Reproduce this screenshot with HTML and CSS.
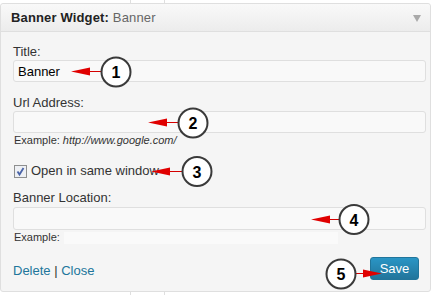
FILE: index.html
```html
<!DOCTYPE html>
<html lang="en">
<head>
    <meta charset="UTF-8">
    <title>Banner Widget</title>
    <link rel="stylesheet" href="styles.css">
</head>
<body>
    <div class="edge"></div>
    <div class="widget">
        <div class="widget-top">
            <h3><strong>Banner Widget:</strong> <span class="in-title">Banner</span></h3>
            <svg class="toggle" width="8" height="7" viewBox="0 0 8 7"><polygon points="0,0 8,0 4,7" fill="#a9a9a9"/></svg>
        </div>
        <form class="widget-inside">
            <label for="title">Title:</label>
            <input id="title" type="text" value="Banner">

            <label for="url" class="gap">Url Address:</label>
            <input id="url" type="text">
            <p class="hint">Example: <em>http://www.google.com/</em></p>

            <label class="check-row">
                <span class="check">
                    <svg width="13" height="13" viewBox="0 0 13 13">
                        <rect x="0.5" y="0.5" width="12" height="12" fill="#eef0f4" stroke="#8e8f8f"/>
                        <path d="M3.5 6.5 L5.5 9.5 L9.5 3" fill="none" stroke="#4a64a8" stroke-width="1.8"/>
                    </svg>
                </span>
                Open in same window
            </label>

            <label for="location" class="gap-small">Banner Location:</label>
            <input id="location" type="text">
            <p class="hint">Example: <span class="blank"></span></p>

            <div class="actions">
                <div class="links"><a href="#">Delete</a> | <a href="#">Close</a></div>
                <button type="button" class="save">Save</button>
            </div>
        </form>
    </div>
    <div class="edge"></div>

    <svg class="callouts" width="440" height="301" viewBox="0 0 440 301">
        <g class="arrow">
            <line x1="89" y1="71.5" x2="101" y2="71.5"/>
            <polygon points="71,71.5 90,67.5 90,75.5"/>
        </g>
        <g class="arrow">
            <line x1="166" y1="122.5" x2="178" y2="122.5"/>
            <polygon points="148,122.5 167,118.5 167,126.5"/>
        </g>
        <g class="arrow">
            <line x1="169" y1="171.5" x2="182" y2="171.5"/>
            <polygon points="151,171.5 170,167.5 170,175.5"/>
        </g>
        <g class="arrow">
            <line x1="329" y1="219.5" x2="339" y2="219.5"/>
            <polygon points="311,219.5 330,215.5 330,223.5"/>
        </g>
        <g class="arrow">
            <line x1="356" y1="273.5" x2="366" y2="273.5"/>
            <polygon points="382,273.5 363,269.5 363,277.5"/>
        </g>

        <circle cx="116" cy="72" r="14.5"/>
        <circle cx="193" cy="123" r="14.5"/>
        <circle cx="197" cy="171.5" r="14.5"/>
        <circle cx="354" cy="219.5" r="14.5"/>
        <circle cx="341" cy="274" r="14.5"/>

        <text x="116" y="78">1</text>
        <text x="193" y="129">2</text>
        <text x="197" y="177.5">3</text>
        <text x="354" y="225.5">4</text>
        <text x="341" y="280">5</text>
    </svg>
</body>
</html>
```
FILE: styles.css
```css
body {
    margin: 0;
    background: #fff;
    font-family: "Liberation Sans", Arial, sans-serif;
    font-size: 13px;
    color: #333;
    position: relative;
    width: 440px;
    height: 301px;
    overflow: hidden;
}
.edge {
    width: 33px;
    height: 3px;
    margin-left: 130px;
    border-left: 1px solid #dfdfdf;
    border-right: 1px solid #dfdfdf;
}
.widget {
    width: 429px;
    border: 1px solid #dfdfdf;
    border-radius: 3px;
    background: #f5f5f5;
}
.widget-top {
    height: 27px;
    display: flex;
    align-items: center;
    justify-content: space-between;
    padding: 0 9px 0 10px;
    background: linear-gradient(#f9f9f9, #ececec);
    border-bottom: 1px solid #dfdfdf;
    border-radius: 3px 3px 0 0;
}
.widget-top h3 {
    margin: 0;
    font-size: 13px;
    font-weight: normal;
    letter-spacing: 0.15px;
    color: #222;
}
.widget-top strong {
    color: #222;
}
.in-title {
    color: #666;
}
.toggle {
    display: block;
    margin-top: 2px;
}
.widget-inside {
    display: flex;
    flex-direction: column;
    padding: 12px 4px 11px 12px;
    margin: 0;
}
.widget-inside > label {
    display: block;
    line-height: 16px;
}
.widget-inside > label.gap {
    margin-top: 13px;
}
.widget-inside > label.gap-small {
    margin-top: 11px;
}
input[type='text'] {
    box-sizing: border-box;
    width: 413px;
    height: 22px;
    margin: 0;
    padding: 0 4px;
    font-family: inherit;
    font-size: 13px;
    color: #000;
    background: #f9f9f9;
    border: 1px solid #dfdfdf;
    border-radius: 3px;
}
#location {
    height: 23px;
    margin-top: 1px;
}
.hint {
    margin: 1px 0 0 1px;
    font-size: 11px;
    line-height: 13px;
    color: #333;
    display: flex;
    align-items: center;
}
.hint em {
    margin-left: 3px;
}
.blank {
    display: inline-block;
    width: 274px;
    height: 12px;
    margin-left: 4px;
    background: #fafafa;
}
.widget-inside > label.check-row {
    display: flex;
    align-items: center;
    margin-top: 16px;
    height: 16px;
    color: #333;
}
.check {
    display: block;
    width: 13px;
    height: 13px;
    margin: 0 4px 0 1px;
}
.check svg {
    display: block;
}
.actions {
    display: flex;
    justify-content: space-between;
    align-items: center;
    margin-top: 13px;
    padding-right: 7px;
}
.links {
    padding-top: 3px;
    color: #333;
}
.links a {
    color: #21759b;
    text-decoration: none;
}
.save {
    width: 49px;
    height: 23px;
    padding: 0;
    font-family: inherit;
    font-size: 13px;
    color: #fff;
    background: linear-gradient(#2a95c5, #21759b);
    border: 1px solid #21759b;
    border-radius: 3px;
}
.callouts {
    position: absolute;
    top: 0;
    left: 0;
    pointer-events: none;
}
.callouts .arrow line {
    stroke: #d40000;
    stroke-width: 1;
}
.callouts .arrow polygon {
    fill: #e00000;
}
.callouts circle {
    fill: #fff;
    stroke: #3a3a3a;
    stroke-width: 2;
}
.callouts text {
    font-family: "Liberation Sans", Arial, sans-serif;
    font-size: 16px;
    font-weight: bold;
    fill: #000;
    text-anchor: middle;
}
```
